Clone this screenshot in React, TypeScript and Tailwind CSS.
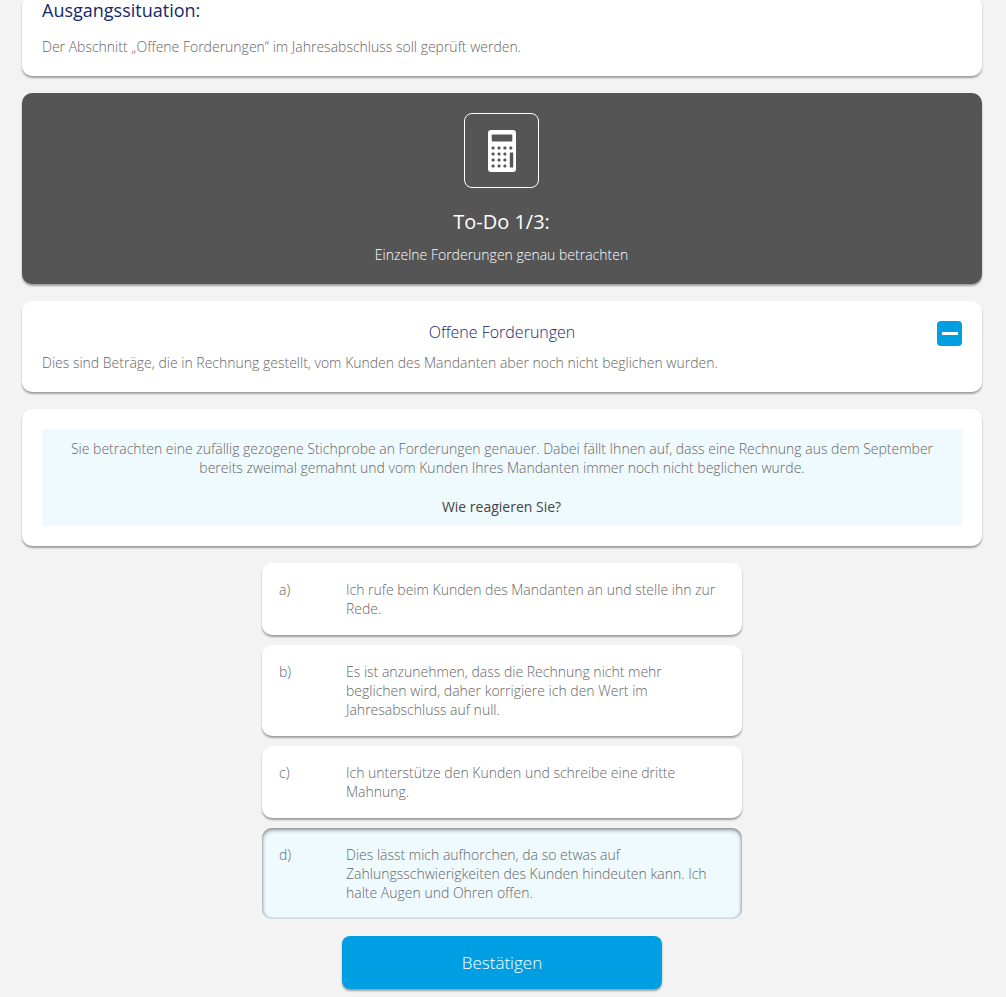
const card = "rounded-[10px] bg-white shadow-[0_2px_2px_rgba(0,0,0,0.35)]";

const answers = [
  { key: "a)", text: "Ich rufe beim Kunden des Mandanten an und stelle ihn zur Rede.", selected: false },
  { key: "b)", text: "Es ist anzunehmen, dass die Rechnung nicht mehr beglichen wird, daher korrigiere ich den Wert im Jahresabschluss auf null.", selected: false },
  { key: "c)", text: "Ich unterstütze den Kunden und schreibe eine dritte Mahnung.", selected: false },
  { key: "d)", text: "Dies lässt mich aufhorchen, da so etwas auf Zahlungsschwierigkeiten des Kunden hindeuten kann. Ich halte Augen und Ohren offen.", selected: true },
];

function Calculator() {
  const keys = [];
  for (let r = 0; r < 4; r++) {
    for (let c = 0; c < 4; c++) {
      if (c === 3 && r > 0) continue;
      keys.push(<rect key={`${r}-${c}`} x={3.6 + c * 5.9} y={16.5 + r * 6} width="3" height="3" rx="1.3" fill="#555555" />);
    }
  }
  return (
    <svg width="28" height="42" viewBox="0 0 28 42" aria-hidden="true">
      <rect x="0" y="0" width="28" height="42" rx="3" fill="#ffffff" />
      <rect x="3.7" y="4.5" width="20.6" height="7" rx="1" fill="#555555" />
      {keys}
      <rect x="21.8" y="22.5" width="3.4" height="15" fill="#555555" />
    </svg>
  );
}

export default function App() {
  return (
    <div className="h-[997px] overflow-hidden bg-[#f3f3f3] pr-[24px] pl-[22px] font-['Open_Sans','Liberation_Sans',sans-serif] text-[14px] leading-[19px] font-light text-[#666666]">
      <section className={`${card} -mt-[4px] h-[80px] px-5 pt-[5px]`}>
        <h2 className="text-[18px] leading-[18px] font-normal text-[#14286e]">Ausgangssituation:</h2>
        <p className="mt-[18px]">Der Abschnitt „Offene Forderungen“ im Jahresabschluss soll geprüft werden.</p>
      </section>

      <section className="mt-[17px] flex h-[191px] flex-col items-center rounded-[10px] bg-[#555555] pt-5 text-white shadow-[0_2px_2px_rgba(0,0,0,0.35)]">
        <div className="mr-px flex h-[75px] w-[75px] items-center justify-center rounded-[8px] border-[1.5px] border-white">
          <Calculator />
        </div>
        <h3 className="mt-[20px] mr-px text-[20px] leading-[28px] font-normal">To-Do 1/3:</h3>
        <p className="mt-[9px] mr-px">Einzelne Forderungen genau betrachten</p>
      </section>

      <section className={`${card} mt-[17px] h-[91px] px-5 pt-5`}>
        <div className="relative">
          <h3 className="text-center text-[16px] leading-[22px] text-[#14286e]">Offene Forderungen</h3>
          <button className="absolute top-0 right-0 flex h-[25px] w-[25px] items-center justify-center rounded-[4px] bg-[#009fe3]">
            <span className="h-[3px] w-[16px] bg-white" />
          </button>
        </div>
        <p className="mt-[10px]">Dies sind Beträge, die in Rechnung gestellt, vom Kunden des Mandanten aber noch nicht beglichen wurden.</p>
      </section>

      <section className={`${card} mt-[17px] p-5`}>
        <div className="h-[97px] bg-[#effafe] px-5 pt-[10px] text-center">
          <p>Sie betrachten eine zufällig gezogene Stichprobe an Forderungen genauer. Dabei fällt Ihnen auf, dass eine Rechnung aus dem September bereits zweimal gemahnt und vom Kunden Ihres Mandanten immer noch nicht beglichen wurde.</p>
          <p className="mt-[20px] mr-px font-normal text-[#444444]">Wie reagieren Sie?</p>
        </div>
      </section>

      <div className="mx-auto mt-[17px] flex w-[480px] flex-col gap-[10px]">
        {answers.map((a) => (
          <button
            key={a.key}
            className={`flex rounded-[10px] px-[17px] py-[17px] text-left ${
              a.selected
                ? "bg-[#effafe] shadow-[inset_0_2px_4px_rgba(0,0,0,0.4),inset_0_0_3px_rgba(0,40,80,0.3)]"
                : "bg-white shadow-[0_2px_2px_rgba(0,0,0,0.35)]"
            }`}
          >
            <span className="w-[67px] shrink-0">{a.key}</span>
            <span>{a.text}</span>
          </button>
        ))}
      </div>

      <button className="mx-auto mt-[17px] block h-[53px] w-[320px] rounded-[8px] bg-[#009fe3] text-[17px] font-light text-white shadow-[0_2px_2px_rgba(0,0,0,0.35)]">
        Bestätigen
      </button>
    </div>
  );
}
